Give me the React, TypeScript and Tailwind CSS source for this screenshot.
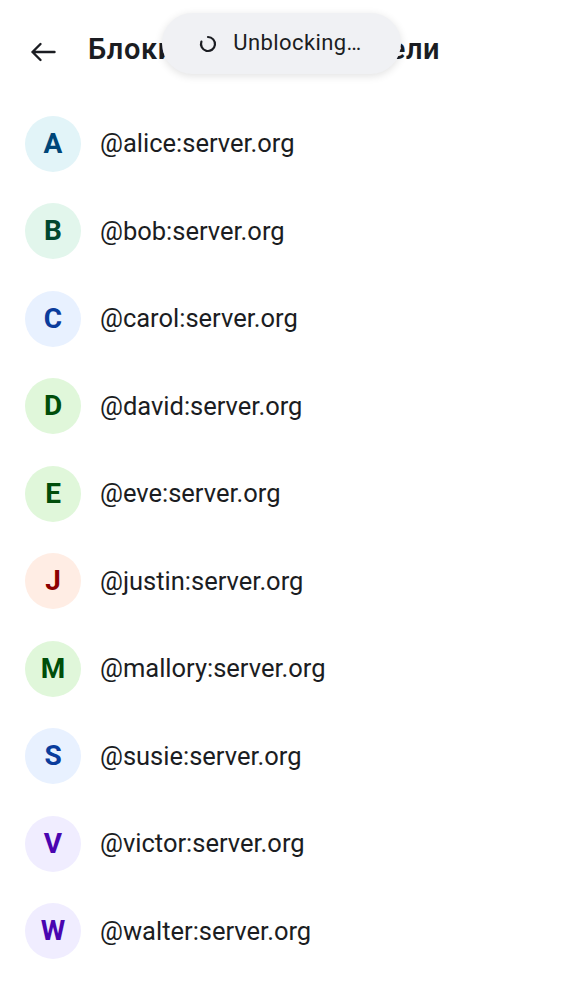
const USERS: { id: string; letter: string; bg: string; fg: string }[] = [
  { id: '@alice:server.org', letter: 'A', bg: 'bg-[#e2f4f8]', fg: 'text-[#004678]' },
  { id: '@bob:server.org', letter: 'B', bg: 'bg-[#e2f6ec]', fg: 'text-[#00472f]' },
  { id: '@carol:server.org', letter: 'C', bg: 'bg-[#e8f1ff]', fg: 'text-[#0a3c9c]' },
  { id: '@david:server.org', letter: 'D', bg: 'bg-[#e0f7da]', fg: 'text-[#004e0a]' },
  { id: '@eve:server.org', letter: 'E', bg: 'bg-[#e0f7da]', fg: 'text-[#004e0a]' },
  { id: '@justin:server.org', letter: 'J', bg: 'bg-[#ffede4]', fg: 'text-[#8c0000]' },
  { id: '@mallory:server.org', letter: 'M', bg: 'bg-[#e0f7da]', fg: 'text-[#004e0a]' },
  { id: '@susie:server.org', letter: 'S', bg: 'bg-[#e8f1ff]', fg: 'text-[#0a3c9c]' },
  { id: '@victor:server.org', letter: 'V', bg: 'bg-[#f0edff]', fg: 'text-[#4a05b0]' },
  { id: '@walter:server.org', letter: 'W', bg: 'bg-[#f0edff]', fg: 'text-[#4a05b0]' },
];

function Spinner() {
  return (
    <svg width="18" height="18" viewBox="0 0 18 18" fill="none">
      <path d="M9 2 A7 7 0 1 1 2.4 6.6" stroke="#1b1d22" strokeWidth="2.2" strokeLinecap="round" />
    </svg>
  );
}

function BackArrow() {
  return (
    <svg width="26" height="20" viewBox="0 0 26 20" fill="none">
      <path d="M24.5 10H2.5M2.5 10L10.5 2M2.5 10L10.5 18" stroke="#1b1d22" strokeWidth="2.4" strokeLinecap="round" strokeLinejoin="round" />
    </svg>
  );
}

export default function App() {
  return (
    <div className="relative w-[562px] h-[1000px] bg-white font-['Roboto',sans-serif] text-[#1b1d22]">
      {/* Top bar */}
      <div className="h-[100px] flex items-center">
        <div className="w-[88px] pl-[30px] pt-[3px] flex items-center">
          <BackArrow />
        </div>
        <h1 className="text-[29px] font-semibold leading-none tracking-[0.6px] pb-[2px]">Блокиров. пользователи</h1>
      </div>

      {/* Toast */}
      <div className="absolute left-[162px] top-[13px] w-[239px] h-[61px] rounded-full bg-[#f0f1f4] shadow-[0_2px_8px_rgba(0,0,0,0.12)] flex items-center justify-center gap-[16px] pr-[2px]">
        <Spinner />
        <span className="text-[22px] tracking-[0.4px] text-[#1b1d22] pb-[2px]">Unblocking…</span>
      </div>

      {/* List */}
      <div className="flex flex-col">
        {USERS.map((u) => (
          <div key={u.id} className="h-[87.5px] flex items-center pl-[25px] gap-[19px]">
            <div className={`w-[56px] h-[56px] rounded-full flex items-center justify-center ${u.bg}`}>
              <span className={`text-[28px] font-bold leading-none ${u.fg}`}>{u.letter}</span>
            </div>
            <span className="text-[25.5px] leading-none">{u.id}</span>
          </div>
        ))}
      </div>
    </div>
  );
}
